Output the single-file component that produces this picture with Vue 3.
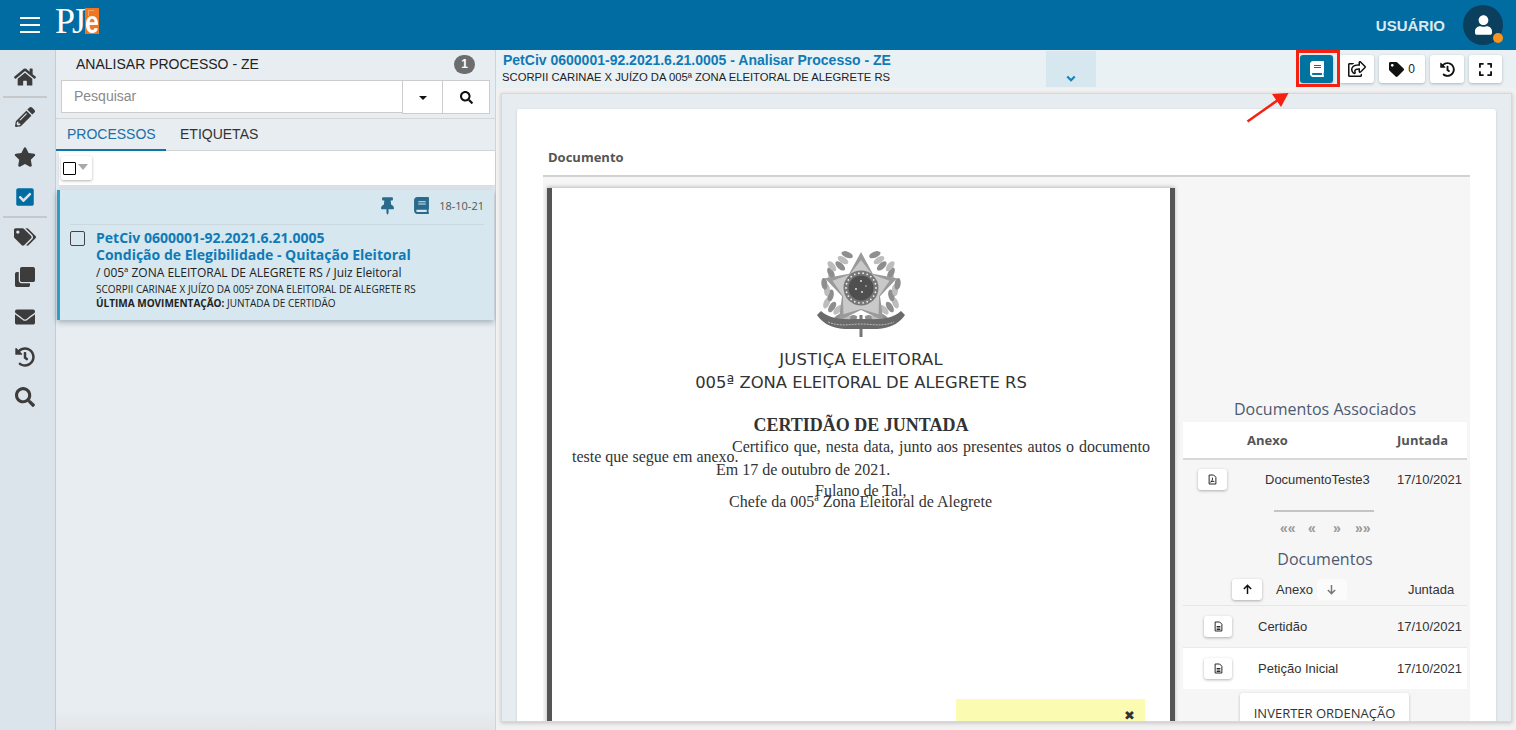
<script setup>
const icons = {
  home: { box: '0 0 576 512', d: 'M280.37 148.26L96 300.11V464a16 16 0 0 0 16 16l112.06-.29a16 16 0 0 0 15.92-16V368a16 16 0 0 1 16-16h64a16 16 0 0 1 16 16v95.64a16 16 0 0 0 16 16.05L464 480a16 16 0 0 0 16-16V300L295.67 148.26a12.19 12.19 0 0 0-15.3 0zM571.6 251.47L488 182.56V44.05a12 12 0 0 0-12-12h-56a12 12 0 0 0-12 12v72.61L318.47 43a48 48 0 0 0-61 0L4.34 251.47a12 12 0 0 0-1.6 16.9l25.5 31A12 12 0 0 0 45.15 301l235.22-193.74a12.19 12.19 0 0 1 15.3 0L530.9 301a12 12 0 0 0 16.9-1.6l25.5-31a12 12 0 0 0-1.7-16.93z' },
  pencil: { box: '0 0 512 512', d: 'M497.9 142.1l-46.1 46.1c-4.7 4.7-12.3 4.7-17 0l-111-111c-4.7-4.7-4.7-12.3 0-17l46.1-46.1c18.7-18.7 49.1-18.7 67.9 0l60.1 60.1c18.8 18.7 18.8 49.1 0 67.9zM284.2 99.8L21.6 362.4.4 483.9c-2.9 16.4 11.4 30.6 27.8 27.8l121.5-21.3 262.6-262.6c4.7-4.7 4.7-12.3 0-17l-111-111c-4.8-4.7-12.4-4.7-17.1 0zM124.1 339.9c-5.5-5.5-5.5-14.3 0-19.8l154-154c5.5-5.5 14.3-5.5 19.8 0s5.5 14.3 0 19.8l-154 154c-5.5 5.5-14.3 5.5-19.8 0zM88 424h48v36.3l-64.5 11.3-31.1-31.1L51.7 376H88v48z' },
  star: { box: '0 0 576 512', d: 'M259.3 17.8L194 150.2 47.9 171.5c-26.2 3.8-36.7 36.1-17.7 54.6l105.7 103-25 145.5c-4.5 26.3 23.2 46 46.4 33.7L288 439.6l130.7 68.7c23.2 12.2 50.9-7.4 46.4-33.7l-25-145.5 105.7-103c19-18.5 8.5-50.8-17.7-54.6L382 150.2 316.7 17.8c-11.7-23.6-45.6-23.9-57.4 0z' },
  check: { box: '0 0 448 512', d: 'M400 480H48c-26.51 0-48-21.49-48-48V80c0-26.51 21.49-48 48-48h352c26.51 0 48 21.49 48 48v352c0 26.51-21.49 48-48 48zm-204.686-98.059l184-184c6.248-6.248 6.248-16.379 0-22.627l-22.627-22.627c-6.248-6.248-16.379-6.249-22.628 0L184 302.745l-70.059-70.059c-6.248-6.248-16.379-6.248-22.628 0l-22.627 22.627c-6.248 6.248-6.248 16.379 0 22.627l104 104c6.249 6.25 16.379 6.25 22.628.001z' },
  tags: { box: '0 0 640 512', d: 'M497.941 225.941L286.059 14.059A48 48 0 0 0 252.118 0H48C21.49 0 0 21.49 0 48v204.118a48 48 0 0 0 14.059 33.941l211.882 211.882c18.744 18.745 49.136 18.746 67.882 0l204.118-204.118c18.745-18.745 18.745-49.137 0-67.882zM112 160c-26.51 0-48-21.49-48-48s21.49-48 48-48 48 21.49 48 48-21.49 48-48 48zm513.941 133.823L421.823 497.941c-18.745 18.745-49.137 18.745-67.882 0l-.36-.36L527.64 323.522c16.999-16.999 26.36-39.6 26.36-63.64s-9.362-46.641-26.36-63.64L331.397 0h48.721a48 48 0 0 1 33.941 14.059l211.882 211.882c18.745 18.745 18.745 49.137 0 67.882z' },
  clone: { box: '0 0 512 512', d: 'M464 0c26.51 0 48 21.49 48 48v288c0 26.51-21.49 48-48 48H176c-26.51 0-48-21.49-48-48V48c0-26.51 21.49-48 48-48h288M176 416c-44.112 0-80-35.888-80-80V128H48c-26.51 0-48 21.49-48 48v288c0 26.51 21.49 48 48 48h288c26.51 0 48-21.49 48-48v-48H176z' },
  envelope: { box: '0 0 512 512', d: 'M502.3 190.8c3.9-3.1 9.7-.2 9.7 4.7V400c0 26.5-21.5 48-48 48H48c-26.5 0-48-21.5-48-48V195.6c0-5 5.7-7.8 9.7-4.7 22.4 17.4 52.1 39.5 154.1 113.6 21.1 15.4 56.7 47.8 92.2 47.6 35.7.3 72-32.8 92.3-47.6 102-74.1 131.6-96.3 154-113.7zM256 320c23.2.4 56.6-29.2 73.4-41.4 132.7-96.3 142.8-104.7 173.4-128.7 5.8-4.5 9.2-11.5 9.2-18.9v-19c0-26.5-21.5-48-48-48H48C21.5 64 0 85.5 0 112v19c0 7.4 3.4 14.3 9.2 18.9 30.6 23.9 40.7 32.4 173.4 128.7 16.8 12.2 50.2 41.8 73.4 41.4z' },
  history: { box: '0 0 512 512', d: 'M504 255.531c.253 136.64-111.18 248.372-247.82 248.468-59.015.042-113.223-20.53-155.822-54.911-11.077-8.94-11.905-25.541-1.839-35.607l11.267-11.267c8.609-8.609 22.353-9.551 31.891-1.984C173.062 425.135 212.781 440 256 440c101.705 0 184-82.311 184-184 0-101.705-82.311-184-184-184-48.814 0-93.149 18.969-126.068 49.932l50.754 50.754c10.08 10.08 2.941 27.314-11.313 27.314H24c-8.837 0-16-7.163-16-16V38.627c0-14.254 17.234-21.393 27.314-11.314l49.372 49.372C129.209 34.136 189.552 8 256 8c136.81 0 247.747 110.78 248 247.531zm-180.912 78.784l9.823-12.63c8.138-10.463 6.253-25.542-4.21-33.679L288 256.349V152c0-13.255-10.745-24-24-24h-16c-13.255 0-24 10.745-24 24v135.651l65.409 50.874c10.463 8.137 25.541 6.253 33.679-4.21z' },
  search: { box: '0 0 512 512', d: 'M505 442.7L405.3 343c-4.5-4.5-10.6-7-17-7H372c27.6-35.3 44-79.7 44-128C416 93.1 322.9 0 208 0S0 93.1 0 208s93.1 208 208 208c48.3 0 92.7-16.4 128-44v16.3c0 6.4 2.5 12.5 7 17l99.7 99.7c9.4 9.4 24.6 9.4 33.9 0l28.3-28.3c9.4-9.4 9.4-24.6.1-34zM208 336c-70.7 0-128-57.2-128-128 0-70.7 57.2-128 128-128 70.7 0 128 57.2 128 128 0 70.7-57.2 128-128 128z' },
  book: { box: '0 0 448 512', d: 'M448 360V24c0-13.3-10.7-24-24-24H96C43 0 0 43 0 96v320c0 53 43 96 96 96h328c13.3 0 24-10.7 24-24v-16c0-7.5-3.5-14.3-8.9-18.7-4.2-15.4-4.2-59.3 0-74.7 5.4-4.3 8.9-11.1 8.9-18.6zM128 134c0-3.3 2.7-6 6-6h212c3.3 0 6 2.7 6 6v20c0 3.3-2.7 6-6 6H134c-3.3 0-6-2.7-6-6v-20zm0 64c0-3.3 2.7-6 6-6h212c3.3 0 6 2.7 6 6v20c0 3.3-2.7 6-6 6H134c-3.3 0-6-2.7-6-6v-20zm253.4 250H96c-17.7 0-32-14.3-32-32 0-17.6 14.4-32 32-32h285.4c-1.9 17.1-1.9 46.9 0 64z' },
  pin: { box: '0 0 384 512', d: 'M298.028 214.267L285.793 96H328c13.255 0 24-10.745 24-24V24c0-13.255-10.745-24-24-24H56C42.745 0 32 10.745 32 24v48c0 13.255 10.745 24 24 24h42.207L85.972 214.267C37.465 236.82 0 277.261 0 328c0 13.255 10.745 24 24 24h136v104.007c0 1.242.289 2.467.845 3.578l24 48c2.941 5.882 11.364 5.893 14.311 0l24-48a8.008 8.008 0 0 0 .845-3.578V352h136c13.255 0 24-10.745 24-24-.001-51.183-37.983-91.42-85.973-113.733z' },
  share: { box: '0 0 576 512', d: 'M561.938 158.06L417.94 14.092C387.926-15.922 336 5.097 336 48.032v57.198c-42.45 1.88-84.03 6.55-120.76 17.99-35.17 10.95-63.07 27.58-82.91 49.42C108.22 199.2 96 232.6 96 271.94c0 61.697 33.178 112.455 84.87 144.76 37.546 23.508 85.248-12.651 71.02-55.74-15.515-47.119-17.156-70.923 84.11-78.76V336c0 42.993 51.968 63.913 81.94 33.94l143.998-144c18.75-18.74 18.75-49.14 0-67.88zM384 336V232.16C255.309 234.082 166.492 255.35 206.31 376 176.79 357.55 144 324.08 144 271.94c0-109.334 129.14-118.947 240-119.85V48l144 144-144 144zm24.74 84.493a82.658 82.658 0 0 0 20.974-9.303c7.976-4.952 18.286.826 18.286 10.214V464c0 26.51-21.49 48-48 48H48c-26.51 0-48-21.49-48-48V112c0-26.51 21.49-48 48-48h132c6.627 0 12 5.373 12 12v4.486c0 4.917-2.987 9.369-7.569 11.152-13.702 5.331-26.396 11.537-38.05 18.585a12.138 12.138 0 0 1-6.28 1.777H54a6 6 0 0 0-6 6v340a6 6 0 0 0 6 6h340a6 6 0 0 0 6-6v-25.966c0-5.37 3.579-10.059 8.74-11.541z' },
  tag: { box: '0 0 512 512', d: 'M0 252.118V48C0 21.49 21.49 0 48 0h204.118a48 48 0 0 1 33.941 14.059l211.882 211.882c18.745 18.745 18.745 49.137 0 67.882L293.823 497.941c-18.745 18.745-49.137 18.745-67.882 0L14.059 286.059A48 48 0 0 1 0 252.118zM112 64c-26.51 0-48 21.49-48 48s21.49 48 48 48 48-21.49 48-48-21.49-48-48-48z' },
  expand: { box: '0 0 448 512', d: 'M0 180V56c0-13.3 10.7-24 24-24h124c6.6 0 12 5.4 12 12v40c0 6.6-5.4 12-12 12H64v84c0 6.6-5.4 12-12 12H12c-6.6 0-12-5.4-12-12zM288 44v40c0 6.6 5.4 12 12 12h84v84c0 6.6 5.4 12 12 12h40c6.6 0 12-5.4 12-12V56c0-13.3-10.7-24-24-24H300c-6.6 0-12 5.4-12 12zm148 276h-40c-6.6 0-12 5.4-12 12v84h-84c-6.6 0-12 5.4-12 12v40c0 6.6 5.4 12 12 12h124c13.3 0 24-10.7 24-24V332c0-6.6-5.4-12-12-12zM160 468v-40c0-6.6-5.4-12-12-12H64v-84c0-6.6-5.4-12-12-12H12c-6.6 0-12 5.4-12 12v124c0 13.3 10.7 24 24 24h124c6.6 0 12-5.4 12-12z' },
  user: { box: '0 0 448 512', d: 'M224 256c70.7 0 128-57.3 128-128S294.7 0 224 0 96 57.3 96 128s57.3 128 128 128zm89.6 32h-16.7c-22.2 10.2-46.9 16-72.9 16s-50.6-5.8-72.9-16h-16.7C60.2 288 0 348.2 0 422.4V464c0 26.5 21.5 48 48 48h352c26.5 0 48-21.5 48-48v-41.6c0-74.2-60.2-134.4-134.4-134.4z' },
}

// null marks a separator line in the side menu
const menu = ['home', null, 'pencil', 'star', 'check', null, 'tags', 'clone', 'envelope', 'history', 'search']

const documentos = [
  { nome: 'Certidão', data: '17/10/2021', cor: false },
  { nome: 'Petição Inicial', data: '17/10/2021', cor: true },
]

// brasão: estrela, pontos do anel e folhas da coroa calculados em volta do centro
const starAt = (r1, r2) =>
  Array.from({ length: 10 }, (_, i) => {
    const r = i % 2 === 0 ? r1 : r2
    const a = (Math.PI / 5) * i - Math.PI / 2
    return `${(45 + r * Math.cos(a)).toFixed(1)},${(41 + r * Math.sin(a)).toFixed(1)}`
  }).join(' ')
const starOuter = starAt(38, 20)
const starInner = starAt(30, 19)
const dots = Array.from({ length: 22 }, (_, i) => {
  const a = ((Math.PI * 2) / 22) * i
  return { x: 45 + 15 * Math.cos(a), y: 39 + 15 * Math.sin(a) }
})
const leaves = []
for (let i = 0; i < 15; i++) {
  const deg = 108 + i * 10
  const a = (deg * Math.PI) / 180
  const r = 31 + (i % 3) * 3
  for (const side of [-1, 1]) {
    leaves.push({
      x: 45 - side * r * Math.cos(a),
      y: 40 + r * Math.sin(a),
      rot: side * (deg - 90),
      tone: i % 2 === 0 ? '#8e8e8e' : '#bdbdbd',
    })
  }
}
</script>

<template>
  <div class="page">
    <header class="topbar">
      <div class="burger"><span></span><span></span><span></span></div>
      <div class="logo">
        <span class="logo-pj">PJ</span>
        <span class="logo-e"><span>e</span></span>
      </div>
      <div class="user-name">USUÁRIO</div>
      <div class="avatar">
        <svg class="avatar-icon" :viewBox="icons.user.box"><path :d="icons.user.d" /></svg>
        <span class="avatar-dot"></span>
      </div>
    </header>

    <div class="body">
      <nav class="sidemenu">
        <template v-for="(item, i) in menu" :key="i">
          <div v-if="!item" class="menu-sep"></div>
          <div v-else class="menu-item" :class="{ active: item === 'check' }">
            <svg :viewBox="icons[item].box"><path :d="icons[item].d" /></svg>
          </div>
        </template>
      </nav>

      <aside class="list-panel">
        <div class="list-head">
          <span class="list-title">ANALISAR PROCESSO - ZE</span>
          <span class="list-badge">1</span>
        </div>
        <div class="search">
          <div class="search-input">Pesquisar</div>
          <div class="search-btn caret-btn"><span class="caret"></span></div>
          <div class="search-btn glass-btn">
            <svg :viewBox="icons.search.box"><path :d="icons.search.d" /></svg>
          </div>
        </div>
        <div class="tabs">
          <div class="tab active">PROCESSOS</div>
          <div class="tab second">ETIQUETAS</div>
        </div>
        <div class="select-strip">
          <div class="select-btn">
            <span class="select-box"></span>
            <span class="select-caret"></span>
          </div>
        </div>
        <article class="card">
          <div class="card-top">
            <svg class="card-pin" :viewBox="icons.pin.box"><path :d="icons.pin.d" /></svg>
            <svg class="card-book" :viewBox="icons.book.box"><path :d="icons.book.d" /></svg>
            <span class="card-date">18-10-21</span>
          </div>
          <div class="card-main">
            <span class="card-check"></span>
            <div class="card-text">
              <div class="card-title">PetCiv 0600001-92.2021.6.21.0005</div>
              <div class="card-title">Condição de Elegibilidade - Quitação Eleitoral</div>
              <div class="card-line">/ 005ª ZONA ELEITORAL DE ALEGRETE RS / Juiz Eleitoral</div>
              <div class="card-small">SCORPII CARINAE X JUÍZO DA 005ª ZONA ELEITORAL DE ALEGRETE RS</div>
              <div class="card-small"><b>ÚLTIMA MOVIMENTAÇÃO:</b> JUNTADA DE CERTIDÃO</div>
            </div>
          </div>
        </article>
      </aside>

      <main class="detail">
        <div class="detail-head">
          <div class="detail-titles">
            <div class="detail-title">PetCiv 0600001-92.2021.6.21.0005 - Analisar Processo - ZE</div>
            <div class="detail-sub">SCORPII CARINAE X JUÍZO DA 005ª ZONA ELEITORAL DE ALEGRETE RS</div>
          </div>
          <div class="expander">
            <svg viewBox="0 0 12 8"><polyline points="1.5,1.5 6,6 10.5,1.5" /></svg>
          </div>
          <div class="tools">
            <div class="tool tool-book">
              <svg :viewBox="icons.book.box"><path :d="icons.book.d" /></svg>
            </div>
            <div class="tool tool-share">
              <svg :viewBox="icons.share.box"><path :d="icons.share.d" /></svg>
            </div>
            <div class="tool tool-tag">
              <svg :viewBox="icons.tag.box"><path :d="icons.tag.d" /></svg>
              <span>0</span>
            </div>
            <div class="tool tool-history">
              <svg :viewBox="icons.history.box"><path :d="icons.history.d" /></svg>
            </div>
            <div class="tool tool-expand">
              <svg :viewBox="icons.expand.box"><path :d="icons.expand.d" /></svg>
            </div>
          </div>
        </div>

        <div class="frame">
          <div class="sheet">
            <div class="sheet-label">Documento</div>
            <div class="sheet-body">
              <div class="paper">
                <svg class="crest" viewBox="0 0 90 90">
                  <g class="crest-art">
                    <ellipse
                      v-for="(l, i) in leaves"
                      :key="i"
                      :cx="l.x"
                      :cy="l.y"
                      rx="6"
                      ry="3"
                      :fill="l.tone"
                      :transform="`rotate(${l.rot} ${l.x} ${l.y})`"
                    />
                    <rect class="sword" x="43.5" y="66" width="3" height="22" />
                    <polygon class="star-back" :points="starOuter" />
                    <polygon class="star-front" :points="starInner" />
                    <circle class="disc-ring" cx="45" cy="39" r="17.5" />
                    <circle class="disc" cx="45" cy="39" r="12.5" />
                    <circle v-for="(p, i) in dots" :key="i" class="dot" :cx="p.x" :cy="p.y" r="0.9" />
                    <circle class="dot" cx="45" cy="32" r="0.9" />
                    <circle class="dot" cx="40" cy="40" r="0.9" />
                    <circle class="dot" cx="46" cy="43" r="0.9" />
                    <circle class="dot" cx="50" cy="37" r="0.7" />
                    <path class="ribbon" d="M1 66 C12 82 30 80 45 80 C60 80 78 82 89 66 L85 62 C74 72 58 70 45 70 C32 70 16 72 5 62 Z" />
                    <path class="ribbon-line" d="M12 73 C24 78 34 75 45 75 C56 75 66 78 78 73" />
                  </g>
                </svg>
                <div class="org first">JUSTIÇA ELEITORAL</div>
                <div class="org">005ª ZONA ELEITORAL DE ALEGRETE RS</div>
                <div class="cert-title">CERTIDÃO DE JUNTADA</div>
                <div class="cert-line l1">Certifico que, nesta data, junto aos presentes autos o documento</div>
                <div class="cert-line l2">teste que segue em anexo.</div>
                <div class="cert-line l3">Em 17 de outubro de 2021.</div>
                <div class="cert-line l4">Fulano de Tal,</div>
                <div class="cert-line l5">Chefe da 005ª Zona Eleitoral de Alegrete</div>
                <div class="note"><span class="note-close">✖</span></div>
              </div>

              <div class="side">
                <div class="side-title assoc">Documentos Associados</div>
                <div class="assoc-head">
                  <span class="ah-anexo">Anexo</span>
                  <span class="ah-junt">Juntada</span>
                </div>
                <div class="assoc-row">
                  <div class="file-btn wide">
                    <svg viewBox="0 0 12 14">
                      <path class="file-outline" d="M1.5 1h6l3 3v9h-9z" />
                      <path class="file-outline" d="M3.5 11c1.5-1 3-4 2.4-6.5M3.5 9.5h5" />
                    </svg>
                  </div>
                  <span class="assoc-name">DocumentoTeste3</span>
                  <span class="row-date">17/10/2021</span>
                </div>
                <div class="pager-line"></div>
                <div class="pager">
                  <span>««</span><span>«</span><span>»</span><span>»»</span>
                </div>
                <div class="side-title docs">Documentos</div>
                <div class="sort-row">
                  <div class="sort-btn up">
                    <svg viewBox="0 0 12 12"><path d="M6 11V2M2 5.5L6 1.5l4 4" /></svg>
                  </div>
                  <span class="sort-label">Anexo</span>
                  <div class="sort-btn down">
                    <svg viewBox="0 0 12 12"><path d="M6 1v9M2 6.5l4 4 4-4" /></svg>
                  </div>
                  <span class="sort-junt">Juntada</span>
                </div>
                <div v-for="d in documentos" :key="d.nome" class="doc-row" :class="{ white: d.cor }">
                  <div class="file-btn">
                    <svg viewBox="0 0 12 14">
                      <path class="file-outline" d="M1.5 1h6l3 3v9h-9z" />
                      <path class="file-outline" d="M3.5 7h5M3.5 9h5M3.5 11h5" />
                    </svg>
                  </div>
                  <span class="doc-name">{{ d.nome }}</span>
                  <span class="row-date">{{ d.data }}</span>
                </div>
                <div class="invert">INVERTER ORDENAÇÃO</div>
              </div>
            </div>
          </div>
        </div>
      </main>
    </div>

    <!-- marcação da captura por cima da barra de ferramentas -->
    <div class="mark-box"></div>
    <svg class="mark-arrow" viewBox="0 0 48 38">
      <line x1="1.5" y1="33.5" x2="32" y2="12" />
      <polygon points="42.5,5 26,6 35,19" />
    </svg>
  </div>
</template>

<style>
html,
body {
  margin: 0;
  background: #f1f1f1;
}
</style>

<style scoped>
.page {
  position: relative;
  width: 1516px;
  height: 730px;
  overflow: hidden;
  font-family: 'Liberation Sans', Arial, sans-serif;
  color: #333;
}

/* topo */
.topbar {
  height: 50px;
  background: #016ca2;
  display: flex;
  align-items: center;
  padding: 0 13px 0 20px;
  box-sizing: border-box;
}
.burger {
  width: 20px;
  display: flex;
  flex-direction: column;
  gap: 5px;
}
.burger span {
  height: 2px;
  background: #fff;
}
.logo {
  margin-left: 15px;
  display: flex;
  align-self: flex-start;
  height: 50px;
}
.logo-pj {
  font-family: 'Liberation Serif', serif;
  font-size: 36px;
  line-height: 40px;
  margin-top: 1px;
  color: #fff;
  letter-spacing: -3px;
}
.logo-e {
  margin: 8px 0 0 2px;
  width: 14px;
  height: 26px;
  background-color: #f0761f;
  background-image:
    linear-gradient(#f6a266, #f6a266),
    linear-gradient(#f6a266, #f6a266);
  background-size: 6px 1px, 1px 6px;
  background-position: 3px 2px, 3px 2px;
  background-repeat: no-repeat;
  display: flex;
  align-items: flex-end;
  justify-content: center;
}
.logo-e span {
  color: #fff;
  font-weight: bold;
  font-size: 25px;
  line-height: 20px;
  transform: scaleY(1.25);
  transform-origin: center bottom;
}
.user-name {
  margin-left: auto;
  font-size: 15px;
  font-weight: bold;
  color: #dbe9f1;
}
.avatar {
  position: relative;
  width: 40px;
  height: 40px;
  border-radius: 50%;
  background: #0b3f5e;
  margin-left: 18px;
  display: flex;
  align-items: center;
  justify-content: center;
}
.avatar-icon {
  width: 17px;
  height: 20px;
  fill: #fff;
}
.avatar-dot {
  position: absolute;
  right: 0;
  bottom: 2px;
  width: 10px;
  height: 10px;
  border-radius: 50%;
  background: #f7941d;
}

.body {
  display: flex;
  height: 680px;
}

/* menu lateral */
.sidemenu {
  width: 55px;
  flex: none;
  background: #dce4eb;
  border-right: 1px solid #c6ccd1;
  padding: 7px 0 0;
}
.menu-item {
  height: 40px;
  width: 50px;
  display: flex;
  align-items: center;
  justify-content: center;
}
.menu-item svg {
  width: 22px;
  height: 20px;
  fill: #3c3c3c;
}
.menu-item.active svg {
  fill: #016ca2;
}
.menu-sep {
  height: 2px;
  width: 44px;
  margin: -1px 0 -1px 3px;
  background: #c6c9cb;
  position: relative;
}

/* painel da lista */
.list-panel {
  width: 439px;
  flex: none;
  background: linear-gradient(#e8edf1 660px, #e3e6e9);
  border-right: 1px solid #cfd4d8;
  display: flex;
  flex-direction: column;
}
.list-head {
  height: 30px;
  display: flex;
  align-items: center;
  padding: 0 20px 2px 20px;
  box-sizing: border-box;
}
.list-title {
  font-size: 14px;
  color: #222;
}
.list-badge {
  margin-left: auto;
  width: 21px;
  height: 19px;
  border-radius: 10px;
  background: #6d6d6d;
  color: #fff;
  font-size: 12px;
  font-weight: bold;
  text-align: center;
  line-height: 19px;
}
.search {
  display: flex;
  height: 34px;
  margin-left: 5px;
  width: 429px;
}
.search-input {
  flex: 1;
  background: #fff;
  border: 1px solid #ccc;
  border-right: none;
  height: 33px;
  box-sizing: border-box;
  padding-left: 12px;
  font-size: 14px;
  line-height: 30px;
  color: #8a8a8a;
}
.search-btn {
  background: #fff;
  border: 1px solid #ccc;
  box-sizing: border-box;
  display: flex;
  align-items: center;
  justify-content: center;
}
.caret-btn {
  width: 41px;
}
.glass-btn {
  width: 47px;
  border-left: none;
}
.glass-btn svg {
  width: 13px;
  height: 13px;
  fill: #111;
}
.caret {
  border: 4px solid transparent;
  border-top-color: #111;
  border-bottom: none;
  margin-top: 1px;
}
.tabs {
  display: flex;
  height: 31px;
  margin-top: 4px;
  border-top: 1px solid #d2d6d9;
  border-bottom: 1px solid #d2d6d9;
}
.tab {
  padding: 0 11px;
  font-size: 14px;
  line-height: 30px;
  color: #333;
  height: 30px;
}
.tab.second {
  padding-left: 14px;
}
.tab.active {
  width: 88px;
  color: #1a70a6;
  border-bottom: 2px solid #0b78a6;
}
.select-strip {
  height: 34px;
  background: #fff;
  margin-left: 3px;
  flex: none;
  box-shadow: 0 2px 4px rgba(0, 0, 0, 0.08);
}
.select-btn {
  margin: 5px 0 0 2px;
  width: 31px;
  height: 24px;
  background: #fff;
  border-radius: 2px;
  box-shadow: 0 1px 3px rgba(0, 0, 0, 0.3);
  display: flex;
  align-items: center;
  padding-left: 2px;
  box-sizing: border-box;
}
.select-box {
  width: 11px;
  height: 11px;
  border: 1.5px solid #000;
  border-radius: 1px;
}
.select-caret {
  margin-left: 2px;
  margin-top: -3px;
  border: 5.5px solid transparent;
  border-top: 6px solid #a9a9a9;
  border-bottom: none;
}
.card {
  margin: 5px 1px 0 1px;
  height: 130px;
  background: #d6e7ef;
  border-left: 3px solid #2f9dc8;
  box-shadow: 0 2px 6px rgba(40, 70, 90, 0.4);
  padding: 0 10px;
  box-sizing: border-box;
  flex: none;
}
.card-top {
  display: flex;
  align-items: center;
  height: 35px;
  border-bottom: 1px solid #cbd9de;
  box-sizing: border-box;
  padding-bottom: 3px;
}
.card-pin {
  margin-left: auto;
  width: 13px;
  height: 18px;
  fill: #2a6a8c;
}
.card-book {
  margin-left: 20px;
  width: 15px;
  height: 17px;
  fill: #2a6a8c;
}
.card-date {
  margin-left: 10px;
  margin-right: 0;
  font-family: 'Open Sans', sans-serif;
  font-size: 11px;
  color: #555;
}
.card-main {
  display: flex;
  padding-top: 4px;
}
.card-check {
  width: 13px;
  height: 13px;
  border: 1.5px solid #444;
  border-radius: 2px;
  margin-top: 2px;
  flex: none;
}
.card-text {
  margin-left: 11px;
  font-family: 'Open Sans', sans-serif;
}
.card-title {
  font-size: 14px;
  font-weight: bold;
  line-height: 17px;
  color: #0f7ab5;
  white-space: nowrap;
}
.card-line {
  font-size: 12px;
  line-height: 17px;
  margin: 1px 0;
  color: #222;
  white-space: nowrap;
}
.card-small {
  font-size: 10px;
  line-height: 14px;
  color: #222;
  white-space: nowrap;
}
.card-small b {
  font-weight: bold;
}

/* painel de detalhe */
.detail {
  flex: 1;
  display: flex;
  flex-direction: column;
  min-width: 0;
  background: #f1f1f1;
}
.detail-head {
  height: 38px;
  background: #e9f1f5;
  display: flex;
  flex: none;
  padding-left: 6px;
}
.detail-titles {
  width: 544px;
}
.detail-title {
  font-size: 14px;
  font-weight: bold;
  color: #0f7ab5;
  line-height: 20px;
  margin-left: 1px;
  white-space: nowrap;
}
.detail-sub {
  font-size: 11.25px;
  line-height: 15px;
  color: #222;
  white-space: nowrap;
}
.expander {
  width: 50px;
  height: 36px;
  margin-top: 1px;
  background: #d6e7ef;
  display: flex;
  align-items: flex-end;
  justify-content: center;
  padding-bottom: 5px;
  box-sizing: border-box;
}
.expander svg {
  width: 10px;
  height: 7px;
  fill: none;
  stroke: #1583bd;
  stroke-width: 2.6;
}
.tools {
  display: flex;
  margin-left: auto;
  padding: 5px 14px 0 0;
  height: 28px;
  gap: 5px;
}
.tool {
  height: 28px;
  background: #fff;
  border-radius: 3px;
  box-shadow: 0 1px 3px rgba(0, 0, 0, 0.25);
  display: flex;
  align-items: center;
  justify-content: center;
  box-sizing: border-box;
}
.tool svg {
  fill: #111;
}
.tool-book {
  width: 33px;
  background: #00749f;
  margin-right: 1px;
}
.tool-book svg {
  width: 14px;
  height: 16px;
  fill: #fff;
}
.tool-share {
  width: 35px;
}
.tool-share svg {
  width: 18px;
  height: 16px;
}
.tool-tag {
  width: 46px;
  gap: 4px;
  font-size: 12px;
  color: #222;
}
.tool-tag svg {
  width: 15px;
  height: 15px;
}
.tool-history {
  width: 34px;
}
.tool-history svg {
  width: 15px;
  height: 15px;
}
.tool-expand {
  width: 33px;
}
.tool-expand svg {
  width: 13px;
  height: 15px;
}

.frame {
  margin: 5px 4px 0 5px;
  height: 629px;
  background: #e7ecf0;
  border: 1px solid #d6d9dc;
  box-sizing: border-box;
  padding: 15px 15px 0;
  overflow: hidden;
  box-shadow: 0 1px 4px rgba(0, 0, 0, 0.2);
}
.sheet {
  background: #fff;
  border-radius: 3px;
  height: 640px;
  padding: 34px 26px 0;
  box-sizing: border-box;
  box-shadow: 0 1px 3px rgba(0, 0, 0, 0.15);
}
.sheet-label {
  font-family: 'Open Sans', sans-serif;
  font-weight: bold;
  font-size: 13px;
  line-height: 28px;
  color: #555;
  padding-left: 5px;
  height: 32px;
  border-bottom: 2px solid #d2d2d2;
}
.sheet-body {
  display: flex;
  background: #f6f6f6;
  height: 560px;
  padding: 11px 0 0 4px;
}
.paper {
  position: relative;
  width: 618px;
  flex: none;
  height: 560px;
  background: #fff;
  border-left: 5px solid #555;
  border-right: 5px solid #555;
  box-shadow: 0 -1px 4px rgba(0, 0, 0, 0.25);
}
.crest {
  display: block;
  width: 90px;
  height: 90px;
  margin: 61px auto 0;
}
.crest-art {
  filter: blur(0.4px);
}
.star-back {
  fill: #9a9a9a;
}
.star-front {
  fill: #c9c9c9;
}
.sword {
  fill: #777;
}
.disc-ring {
  fill: #777;
}
.disc {
  fill: #4f4f4f;
}
.dot {
  fill: #eee;
}
.ribbon {
  fill: #6a6a6a;
}
.ribbon-line {
  fill: none;
  stroke: #bbb;
  stroke-width: 1;
  stroke-dasharray: 2 1;
}
.org {
  font-family: 'DejaVu Sans', Verdana, sans-serif;
  font-size: 16.4px;
  line-height: 23px;
  text-align: center;
  color: #333;
  white-space: nowrap;
}
.org.first {
  margin-top: 9px;
  letter-spacing: 0.3px;
}
.cert-title {
  font-family: 'Liberation Serif', serif;
  font-weight: bold;
  font-size: 18px;
  line-height: 20px;
  margin-top: 21px;
  text-align: center;
  color: #333;
}
.cert-line {
  font-family: 'Liberation Serif', serif;
  font-size: 16px;
  line-height: 18px;
  color: #333;
  white-space: nowrap;
}
.l1 {
  margin: 3px 0 0 180px;
  width: 418px;
  text-align: justify;
  text-align-last: justify;
}
.l2 {
  margin: -8px 0 0 20px;
}
.l3 {
  margin: -5px 0 0 164px;
}
.l4 {
  margin: 3px 0 0 263px;
}
.l5 {
  margin: -7px 0 0 177px;
}
.note {
  position: absolute;
  left: 404px;
  top: 511px;
  width: 189px;
  height: 40px;
  background: #fbfbb1;
}
.note-close {
  position: absolute;
  right: 10px;
  top: 9px;
  font-family: 'DejaVu Sans', sans-serif;
  font-size: 13px;
  color: #333;
}

/* coluna de documentos */
.side {
  width: 284px;
  margin-left: 8px;
  font-size: 13px;
  color: #333;
  flex: none;
}
.side-title {
  font-family: 'Open Sans', sans-serif;
  color: #4d5a72;
  text-align: center;
}
.assoc {
  font-size: 16px;
  line-height: 22px;
  margin: 210px 0 2px;
}
.assoc-head {
  height: 36px;
  background: #fff;
  border-bottom: 2px solid #d8d8d8;
  font-family: 'Open Sans', sans-serif;
  font-weight: bold;
  font-size: 13px;
  color: #555;
  display: flex;
  align-items: center;
}
.ah-anexo {
  margin-left: 64px;
}
.ah-junt {
  margin-left: auto;
  margin-right: 19px;
}
.assoc-row {
  display: flex;
  align-items: center;
  height: 38px;
}
.file-btn {
  width: 28px;
  height: 21px;
  background: #fff;
  border-radius: 3px;
  box-shadow: 0 1px 3px rgba(0, 0, 0, 0.3);
  display: flex;
  align-items: center;
  justify-content: center;
  margin-left: 21px;
  flex: none;
}
.file-btn.wide {
  width: 29px;
  margin-left: 15px;
}
.file-btn svg {
  width: 9px;
  height: 11px;
}
.file-outline {
  fill: none;
  stroke: #222;
  stroke-width: 1.3;
}
.assoc-name {
  margin-left: 38px;
  color: #333;
}
.row-date {
  margin-left: auto;
  margin-right: 5px;
  color: #333;
}
.pager-line {
  width: 100px;
  height: 2px;
  background: #c4c4c4;
  margin: 12px 0 0 91px;
}
.pager {
  display: flex;
  margin: 8px 0 0 97px;
  color: #999;
  font-size: 14px;
  font-weight: bold;
  line-height: 16px;
}
.pager span:nth-child(1) {
  width: 28px;
}
.pager span:nth-child(2) {
  width: 25px;
}
.pager span:nth-child(3) {
  width: 22px;
}
.side-title.docs {
  font-size: 16px;
  line-height: 22px;
  margin-top: 12px;
}
.sort-row {
  display: flex;
  align-items: center;
  height: 32px;
  margin-top: 3px;
  border-bottom: 1px solid #e6e6e6;
}
.sort-btn {
  width: 30px;
  height: 21px;
  border-radius: 3px;
  background: #fbfbfb;
  display: flex;
  align-items: center;
  justify-content: center;
  flex: none;
}
.sort-btn svg {
  width: 11px;
  height: 11px;
  fill: none;
  stroke-width: 1.6;
}
.sort-btn.up {
  margin-left: 49px;
  background: #fff;
  box-shadow: 0 1px 3px rgba(0, 0, 0, 0.3);
}
.sort-btn.up svg {
  stroke: #111;
}
.sort-btn.down svg {
  stroke: #777;
}
.sort-label {
  margin-left: 14px;
  margin-right: 4px;
}
.sort-junt {
  margin-left: 61px;
}
.doc-row {
  display: flex;
  align-items: center;
  height: 41px;
  border-bottom: 1px solid #eaeaea;
}
.doc-row.white {
  background: #fff;
  border-bottom: none;
}
.doc-name {
  margin-left: 26px;
}
.invert {
  margin: 4px 0 0 57px;
  width: 169px;
  height: 40px;
  background: #fff;
  border-radius: 3px;
  box-shadow: 0 1px 3px rgba(0, 0, 0, 0.25);
  font-family: 'Open Sans', sans-serif;
  font-size: 13px;
  color: #333;
  text-align: center;
  line-height: 40px;
}

.mark-box {
  position: absolute;
  left: 1296px;
  top: 50px;
  width: 44px;
  height: 37px;
  border: 3px solid #f5200f;
  box-sizing: border-box;
}
.mark-arrow {
  position: absolute;
  left: 1246px;
  top: 88px;
  width: 48px;
  height: 38px;
}
.mark-arrow line {
  stroke: #f5200f;
  stroke-width: 2.5;
}
.mark-arrow polygon {
  fill: #f5200f;
}
</style>
